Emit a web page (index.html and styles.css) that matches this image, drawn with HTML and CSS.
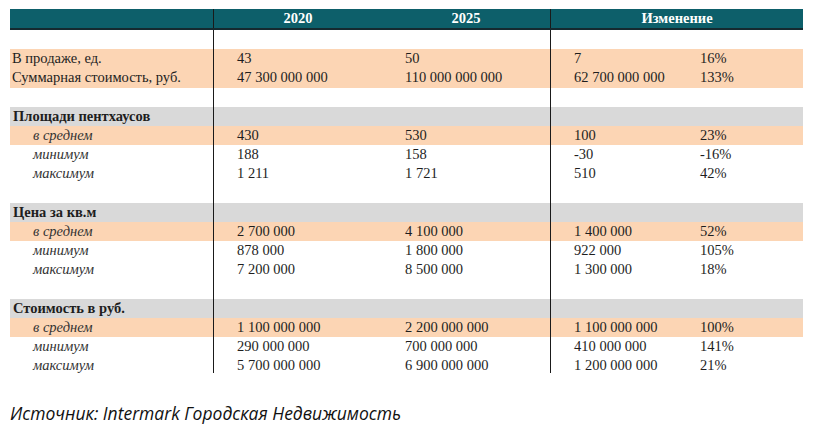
FILE: index.html
```html
<!DOCTYPE html>
<html lang="ru">
<head>
<meta charset="utf-8">
<title>Пентхаусы</title>
<link rel="stylesheet" href="styles.css">
</head>
<body>
<div class="page">
  <div class="table">
    <div class="row head">
      <div class="c c-label"></div>
      <div class="c c-y1 vline">2020</div>
      <div class="c c-y2">2025</div>
      <div class="c c-chg vline">Изменение</div>
    </div>
    <div class="row"><div class="c"></div><div class="c vline"></div><div class="c"></div><div class="c vline"></div><div class="c"></div></div>
    <div class="row orange"><div class="c">В продаже, ед.</div><div class="c vline">43</div><div class="c">50</div><div class="c vline">7</div><div class="c">16%</div></div>
    <div class="row orange"><div class="c">Суммарная стоимость, руб.</div><div class="c vline">47 300 000 000</div><div class="c">110 000 000 000</div><div class="c vline">62 700 000 000</div><div class="c">133%</div></div>
    <div class="row"><div class="c"></div><div class="c vline"></div><div class="c"></div><div class="c vline"></div><div class="c"></div></div>

    <div class="row gray"><div class="c bold">Площади пентхаусов</div><div class="c vline"></div><div class="c"></div><div class="c vline"></div><div class="c"></div></div>
    <div class="row orange"><div class="c sub">в среднем</div><div class="c vline">430</div><div class="c">530</div><div class="c vline">100</div><div class="c">23%</div></div>
    <div class="row"><div class="c sub">минимум</div><div class="c vline">188</div><div class="c">158</div><div class="c vline">-30</div><div class="c">-16%</div></div>
    <div class="row"><div class="c sub">максимум</div><div class="c vline">1 211</div><div class="c">1 721</div><div class="c vline">510</div><div class="c">42%</div></div>
    <div class="row"><div class="c"></div><div class="c vline"></div><div class="c"></div><div class="c vline"></div><div class="c"></div></div>

    <div class="row gray"><div class="c bold">Цена за кв.м</div><div class="c vline"></div><div class="c"></div><div class="c vline"></div><div class="c"></div></div>
    <div class="row orange"><div class="c sub">в среднем</div><div class="c vline">2 700 000</div><div class="c">4 100 000</div><div class="c vline">1 400 000</div><div class="c">52%</div></div>
    <div class="row"><div class="c sub">минимум</div><div class="c vline">878 000</div><div class="c">1 800 000</div><div class="c vline">922 000</div><div class="c">105%</div></div>
    <div class="row"><div class="c sub">максимум</div><div class="c vline">7 200 000</div><div class="c">8 500 000</div><div class="c vline">1 300 000</div><div class="c">18%</div></div>
    <div class="row"><div class="c"></div><div class="c vline"></div><div class="c"></div><div class="c vline"></div><div class="c"></div></div>

    <div class="row gray"><div class="c bold">Стоимость в руб.</div><div class="c vline"></div><div class="c"></div><div class="c vline"></div><div class="c"></div></div>
    <div class="row orange"><div class="c sub">в среднем</div><div class="c vline">1 100 000 000</div><div class="c">2 200 000 000</div><div class="c vline">1 100 000 000</div><div class="c">100%</div></div>
    <div class="row"><div class="c sub">минимум</div><div class="c vline">290 000 000</div><div class="c">700 000 000</div><div class="c vline">410 000 000</div><div class="c">141%</div></div>
    <div class="row"><div class="c sub">максимум</div><div class="c vline">5 700 000 000</div><div class="c">6 900 000 000</div><div class="c vline">1 200 000 000</div><div class="c">21%</div></div>
  </div>
  <p class="source">Источник: Intermark Городская Недвижимость</p>
</div>
</body>
</html>
```

FILE: styles.css
```css
html, body {
  margin: 0;
  padding: 0;
  background: #ffffff;
}

.page {
  padding: 9px 0 0 10px;
}

.table {
  width: 793px;
  height: 364px;
  overflow: hidden;
  font-family: "Liberation Serif", "Times New Roman", serif;
  font-size: 14.5px;
  color: #1e1e1e;
}

.row {
  display: grid;
  grid-template-columns: 203px 169px 168px 127px 126px;
  height: 19.2px;
  line-height: 19.2px;
}

.row .c {
  padding-left: 23px;
  white-space: nowrap;
  overflow: hidden;
}

.row .c:first-child {
  padding-left: 2px;
}

.row .c.sub {
  padding-left: 23px;
  font-style: italic;
  color: #333333;
}

.row .c.bold {
  font-weight: bold;
  padding-left: 3px;
}

.vline {
  border-left: 1px solid #1a1a1a;
}

.orange {
  background: #fcd5b4;
}

.gray {
  background: #d9d9d9;
}

.head {
  grid-template-columns: 203px 169px 168px 253px;
  height: 19px;
  line-height: 19px;
  background: #0d5f6a;
  color: #ffffff;
  font-weight: bold;
  border-bottom: 2px solid #152a30;
}

.head .c {
  padding-left: 0;
  text-align: center;
}

.source {
  margin: 29px 0 0 0;
  font-family: "Open Sans", "Noto Sans", sans-serif;
  font-style: italic;
  font-size: 17.5px;
  line-height: 22px;
  color: #111111;
}
```
